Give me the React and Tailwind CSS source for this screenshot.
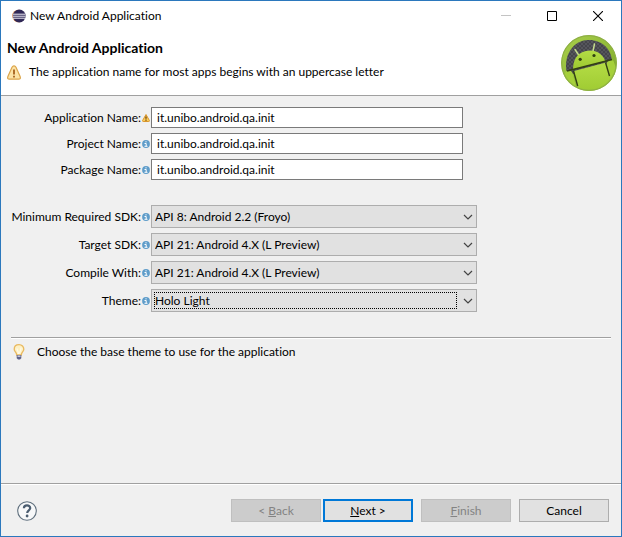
import React from "react";

function EclipseIcon() {
  return (
    <svg width="14" height="14" viewBox="0 0 14 14" aria-hidden="true">
      <circle cx="6.5" cy="7" r="6.3" fill="#d98a4e" />
      <circle cx="7.3" cy="7" r="6.4" fill="#2f2756" />
      <path d="M1 5.2h12.4M.8 7.2h12.8M1 9.2h12.4" stroke="#f1eff8" strokeWidth="1" />
    </svg>
  );
}

function WarningIcon({ className }) {
  return (
    <svg className={className} viewBox="0 0 14 15" aria-hidden="true">
      <path
        d="M7 .8C8 .8 8.500 1.300 9 2.200l4 9c.8 2 .3 3-1.400 3H2.400c-1.700 0-2.200-1-1.400-3l4-9C5.500 1.300 6 .8 7 .8z"
        fill="#fce3a6"
        stroke="#dca54c"
        strokeWidth="1.200"
      />
      <path d="M7 4.500v5" stroke="#a5601c" strokeWidth="1.800" />
      <path d="M7 10.800v1.800" stroke="#a5601c" strokeWidth="1.800" />
    </svg>
  );
}

function SmallWarningIcon() {
  return (
    <svg className="h-2 w-2" viewBox="0 0 8 8" aria-hidden="true">
      <path d="M4 .5L7.400 6.500Q7.600 7.500 6.800 7.500H1.200Q.4 7.500.6 6.500z" fill="#fbcf5c" stroke="#d9962c" />
      <path d="M4 2.500v2.200M4 5.500v1.200" stroke="#5e3208" strokeWidth="1.200" />
    </svg>
  );
}

function InfoIcon() {
  return (
    <svg className="h-2 w-2" viewBox="0 0 8 8" aria-hidden="true">
      <circle cx="4" cy="4" r="3.900" fill="#5f9dca" />
      <path d="M4 1.200v1.200M2.500 3.500h1.700v2.700M2.500 6.300h3" stroke="#fff" strokeWidth="1" fill="none" />
    </svg>
  );
}

function AndroidBadge() {
  return (
    <svg className="h-14 w-14 shrink-0" viewBox="0 0 56 56" aria-hidden="true">
      <defs>
        <linearGradient id="rim" x1="0" y1="0" x2="1" y2="1">
          <stop offset="0" stopColor="#a9cf4c" />
          <stop offset="0.600" stopColor="#8fb935" />
          <stop offset="1" stopColor="#6f9622" />
        </linearGradient>
        <linearGradient id="body" x1="0" y1="0" x2="0" y2="1">
          <stop offset="0" stopColor="#b4dc45" />
          <stop offset="1" stopColor="#9cc930" />
        </linearGradient>
        <pattern id="weave" width="4" height="4" patternUnits="userSpaceOnUse">
          <rect width="4" height="4" fill="#45454b" />
          <path d="M0 0h2v2H0zM2 2h2v2H2z" fill="#55555c" />
        </pattern>
        <clipPath id="disc">
          <circle cx="28" cy="28" r="28" />
        </clipPath>
      </defs>
      <g clipPath="url(#disc)">
        <circle cx="28" cy="28" r="28" fill="url(#rim)" />
        <path d="M5.500 36C3 20 12 5.500 27 5 41 4.500 50 14 51 25.500L46 30 12 39z" fill="url(#weave)" />
        <path d="M14 14.500l4 6M33.500 9l-1.500 7" stroke="#c5dc8e" strokeWidth="1.500" strokeLinecap="round" />
        <path d="M12 34.500C12 25 16 18.500 24 16.300c9-2.500 17 1.500 20.300 9.700z" fill="url(#body)" />
        <path d="M13 36l32-8.500L51 50 36 60H19z" fill="url(#body)" />
        <path d="M4.500 37c3-2.500 6-2 7 1l5 20L0 50zM45.500 28c2-3 5-4 7-2l5 14-8 9z" fill="#a6d03a" />
        <path d="M6 36l45-11.500M12.500 36l4.200 15M44.500 27.500l4 13.500" stroke="#334014" strokeWidth="1.400" fill="none" />
        <circle cx="19.200" cy="24.300" r="1.600" fill="#304010" />
        <circle cx="33" cy="20.500" r="1.600" fill="#304010" />
      </g>
      <circle cx="28" cy="28" r="27.300" fill="none" stroke="#8fb046" strokeWidth="1.200" />
    </svg>
  );
}

function BulbIcon() {
  return (
    <svg className="h-4 w-4" viewBox="0 0 16 16" aria-hidden="true">
      <path
        d="M8 .7c-3 0-4.800 2-4.800 4.500C3.200 7.500 5.700 8.500 5.700 11h4.600c0-2.500 2.500-3.500 2.500-5.800C12.800 2.700 11 .7 8 .7z"
        fill="#fdf0c4"
        stroke="#e9b95f"
        strokeWidth="1.300"
      />
      <path d="M6 4.500c0 2 1.300 2 1.500 5.500M9.800 3.500c.8 2-1 3-1.200 6" stroke="#fffbe8" strokeWidth="1.200" fill="none" />
      <path d="M5.700 11h4.600v3.200L9 15.500H7l-1.300-1.300z" fill="#5f6288" />
      <path d="M6.500 12.200h3" stroke="#c9cbe0" strokeWidth="1.500" />
    </svg>
  );
}

function HelpIcon() {
  return (
    <svg className="block h-5 w-5" viewBox="0 0 20 20" aria-hidden="true">
      <circle cx="10" cy="10" r="9.300" fill="#f7f8f9" stroke="#5f6f7d" strokeWidth="1.100" />
      <path
        d="M6.900 7.300C6.900 5.400 8.200 4.400 10 4.400s3.200 1 3.200 2.700c0 2.300-3 2.400-3 5"
        fill="none"
        stroke="#4b5d70"
        strokeWidth="2.200"
      />
      <circle cx="10.100" cy="15" r="1.400" fill="#4b5d70" />
    </svg>
  );
}

const captionButton = "flex h-[30px] w-[46px] items-center justify-center";

function TitleBar() {
  return (
    <div className="flex h-[30px] items-center bg-white pl-[11px]">
      <EclipseIcon />
      <span className="ml-1 grow">New Android Application</span>
      <button type="button" aria-label="Minimize" disabled className={captionButton}>
        <svg width="10" height="10" viewBox="0 0 10 10">
          <path d="M0 4.500h10" stroke="#c4c4c4" />
        </svg>
      </button>
      <button type="button" aria-label="Maximize" className={captionButton}>
        <svg width="10" height="10" viewBox="0 0 10 10">
          <path d="M.5.500h9v9h-9z" stroke="#000" fill="none" />
        </svg>
      </button>
      <button type="button" aria-label="Close" className={captionButton}>
        <svg width="10" height="10" viewBox="0 0 10 10">
          <path d="M0 0l10 10M10 0L0 10" stroke="#000" strokeWidth="1.100" />
        </svg>
      </button>
    </div>
  );
}

function Row({ id, label, warning, children }) {
  return (
    <div className="flex items-center">
      <label htmlFor={id} className="w-[140px] shrink-0 text-right">
        {label}
      </label>
      <span className="flex w-[10px] shrink-0 justify-center">
        {warning ? <SmallWarningIcon /> : <InfoIcon />}
      </span>
      {children}
    </div>
  );
}

function TextField({ id, label, value, warning }) {
  return (
    <Row id={id} label={label} warning={warning}>
      <input
        id={id}
        type="text"
        defaultValue={value}
        className="h-[21px] w-[312px] border border-[#7a7a7a] bg-white px-[5px] outline-none"
      />
    </Row>
  );
}

function SelectField({ id, label, value, focused }) {
  return (
    <Row id={id} label={label}>
      <div className="relative w-[326px]">
        <select
          id={id}
          defaultValue={value}
          className="block h-[23px] w-full appearance-none border border-[#adadad] bg-[#e1e1e1] pl-[3px] pr-5 outline-none"
        >
          <option>{value}</option>
        </select>
        <svg
          className="pointer-events-none absolute right-1 top-2 h-2 w-[10px]"
          viewBox="0 0 10 8"
          aria-hidden="true"
        >
          <path d="M1 2l4 4 4-4" fill="none" stroke="#444" strokeWidth="1.200" />
        </svg>
        {focused && (
          <span className="pointer-events-none absolute inset-y-[3px] left-[3px] right-5 border border-dotted border-black" />
        )}
      </div>
    </Row>
  );
}

const dialogButton = "h-[23px] w-[90px] border";

export default function App() {
  return (
    <div className="flex min-h-screen flex-col border border-[#2b78bd] bg-[#f0f0f0] font-[Lato,'Open_Sans',sans-serif] text-xs leading-4 text-black [font-variant-ligatures:none]">
      <TitleBar />
      <header className="flex justify-between border-b border-[#a0a0a0] bg-white pb-1 pl-[6px] pr-1">
        <div className="pt-[9px]">
          <h1 className="text-sm leading-4 font-bold">New Android Application</h1>
          <p className="mt-2 flex items-center gap-2">
            <WarningIcon className="h-[15px] w-[14px]" />
            The application name for most apps begins with an uppercase letter
          </p>
        </div>
        <div className="pt-1">
          <AndroidBadge />
        </div>
      </header>

      <main className="grow pt-[11px]">
        <div className="flex flex-col gap-[5px]">
          <TextField id="app" label="Application Name:" value="it.unibo.android.qa.init" warning />
          <TextField id="project" label="Project Name:" value="it.unibo.android.qa.init" />
          <TextField id="package" label="Package Name:" value="it.unibo.android.qa.init" />
        </div>
        <div className="mt-[25px] flex flex-col gap-[5px]">
          <SelectField id="min-sdk" label="Minimum Required SDK:" value="API 8: Android 2.2 (Froyo)" />
          <SelectField id="target-sdk" label="Target SDK:" value="API 21: Android 4.X (L Preview)" />
          <SelectField id="compile" label="Compile With:" value="API 21: Android 4.X (L Preview)" />
          <SelectField id="theme" label="Theme:" value="Holo Light" focused />
        </div>
        <hr className="ml-[10px] mr-[10px] mt-[25px] h-[2px] border-b border-t border-b-white border-t-[#a0a0a0]" />
        <p className="mt-[5px] flex items-center gap-[10px] pl-[10px]">
          <BulbIcon />
          Choose the base theme to use for the application
        </p>
      </main>

      <footer className="flex items-center border-t border-[#a0a0a0] pb-[14px] pl-4 pr-3 pt-[15px] shadow-[inset_0_1px_0_#fff]">
        <button type="button" aria-label="Help">
          <HelpIcon />
        </button>
        <div className="ml-auto flex gap-2">
          <div className="flex gap-[2px]">
            <button type="button" disabled className={`${dialogButton} border-[#bfbfbf] bg-[#cccccc] text-[#838383]`}>
              &lt; <u>B</u>ack
            </button>
            <button type="button" className="h-[23px] w-[90px] border-2 border-[#0078d7] bg-[#e1e1e1]">
              <u>N</u>ext &gt;
            </button>
          </div>
          <button type="button" disabled className={`${dialogButton} border-[#bfbfbf] bg-[#cccccc] text-[#838383]`}>
            <u>F</u>inish
          </button>
          <button type="button" className={`${dialogButton} border-[#adadad] bg-[#e1e1e1]`}>
            Cancel
          </button>
        </div>
      </footer>
    </div>
  );
}
